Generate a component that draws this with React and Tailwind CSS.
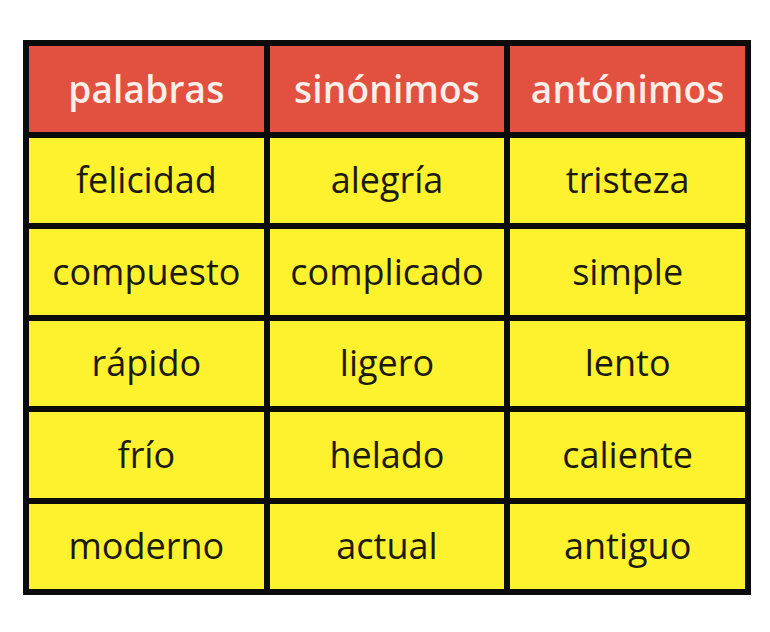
import React from 'react';

const rows = [
  ['felicidad', 'alegría', 'tristeza'],
  ['compuesto', 'complicado', 'simple'],
  ['rápido', 'ligero', 'lento'],
  ['frío', 'helado', 'caliente'],
  ['moderno', 'actual', 'antiguo'],
];

const headers = ['palabras', 'sinónimos', 'antónimos'];

export default function App() {
  return (
    <div className="w-[770px] h-[632px] bg-white pt-[40px] pl-[23px]" style={{ fontFamily: '"Open Sans", sans-serif' }}>
      <div className="w-[728px] h-[555px] bg-[#0b0b0b] p-[6px] grid grid-cols-3 grid-rows-6 gap-[6px]">
        {headers.map((h) => (
          <div key={h} className="bg-[#e2503f] flex items-center justify-center text-[#fdeee8] text-[37px] font-semibold tracking-[0.2px]">
            {h}
          </div>
        ))}
        {rows.flat().map((w, i) => (
          <div key={i} className="bg-[#fef22e] flex items-center justify-center text-[#1c1a0c] text-[36px]">
            {w}
          </div>
        ))}
      </div>
    </div>
  );
}
